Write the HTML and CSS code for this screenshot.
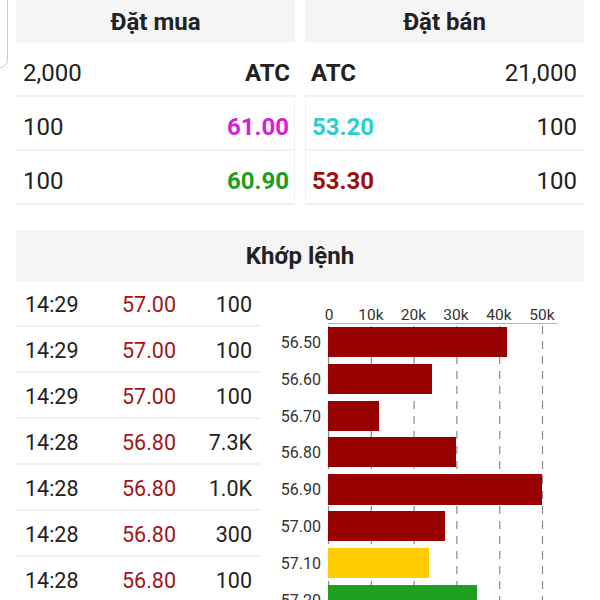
FILE: index.html
```html
<!DOCTYPE html>
<html lang="vi">
<head>
<meta charset="utf-8">
<title>Khớp lệnh</title>
<link rel="stylesheet" href="styles.css">
</head>
<body>
<div class="page">
  <div class="edge-handle"></div>

  <section class="book">
    <div class="book-col buy">
      <div class="book-head">Đặt mua</div>
      <div class="book-row"><span>2,000</span><span class="bold">ATC</span></div>
      <div class="book-row framed"><span>100</span><span class="bold c-ceil">61.00</span></div>
      <div class="book-row framed"><span>100</span><span class="bold c-up">60.90</span></div>
    </div>
    <div class="book-col sell">
      <div class="book-head">Đặt bán</div>
      <div class="book-row"><span class="bold">ATC</span><span>21,000</span></div>
      <div class="book-row framed"><span class="bold c-floor">53.20</span><span>100</span></div>
      <div class="book-row framed"><span class="bold c-down">53.30</span><span>100</span></div>
    </div>
  </section>

  <section class="match">
    <div class="match-head">Khớp lệnh</div>
    <div class="match-body">
      <div class="trades">
        <div class="trade"><span>14:29</span><span class="t-price">57.00</span><span class="t-vol">100</span></div>
        <div class="trade"><span>14:29</span><span class="t-price">57.00</span><span class="t-vol">100</span></div>
        <div class="trade"><span>14:29</span><span class="t-price">57.00</span><span class="t-vol">100</span></div>
        <div class="trade"><span>14:28</span><span class="t-price">56.80</span><span class="t-vol">7.3K</span></div>
        <div class="trade"><span>14:28</span><span class="t-price">56.80</span><span class="t-vol">1.0K</span></div>
        <div class="trade"><span>14:28</span><span class="t-price">56.80</span><span class="t-vol">300</span></div>
        <div class="trade"><span>14:28</span><span class="t-price">56.80</span><span class="t-vol">100</span></div>
      </div>
      <svg class="chart" width="340" height="319" viewBox="260 281 340 319" xmlns="http://www.w3.org/2000/svg">
        <g class="axis-text" font-size="15.5" text-anchor="middle">
          <text x="329" y="319.5">0</text>
          <text x="371" y="319.5">10k</text>
          <text x="413.5" y="319.5">20k</text>
          <text x="456" y="319.5">30k</text>
          <text x="499" y="319.5">40k</text>
          <text x="542" y="319.5">50k</text>
        </g>
        <line x1="328" y1="323.5" x2="558" y2="323.5" stroke="#b5b5b5" stroke-width="1"/>
        <g stroke="#8a8a8a" stroke-width="1.2" stroke-dasharray="8 7">
          <line x1="328.5" y1="326" x2="328.5" y2="600"/>
          <line x1="371.3" y1="326" x2="371.3" y2="600"/>
          <line x1="414.1" y1="326" x2="414.1" y2="600"/>
          <line x1="456.9" y1="326" x2="456.9" y2="600"/>
          <line x1="499.7" y1="326" x2="499.7" y2="600"/>
          <line x1="542.5" y1="326" x2="542.5" y2="600"/>
        </g>
        <g>
          <rect x="328" y="327" width="179" height="30" fill="#990000"/>
          <rect x="328" y="364" width="104" height="30" fill="#990000"/>
          <rect x="328" y="401" width="51" height="30" fill="#990000"/>
          <rect x="328" y="437" width="128" height="30" fill="#990000"/>
          <rect x="328" y="474" width="214" height="31" fill="#990000"/>
          <rect x="328" y="511" width="117" height="30" fill="#990000"/>
          <rect x="328" y="548" width="101" height="30" fill="#ffcc00"/>
          <rect x="328" y="585" width="149" height="30" fill="#1ea01e"/>
        </g>
        <g class="axis-text" font-size="16" text-anchor="end">
          <text x="321" y="347.5">56.50</text>
          <text x="321" y="384.5">56.60</text>
          <text x="321" y="421.5">56.70</text>
          <text x="321" y="458">56.80</text>
          <text x="321" y="495">56.90</text>
          <text x="321" y="532">57.00</text>
          <text x="321" y="569">57.10</text>
          <text x="321" y="606">57.20</text>
        </g>
      </svg>
    </div>
  </section>
</div>
</body>
</html>
```

FILE: styles.css
```css
* { box-sizing: border-box; }

html, body {
  margin: 0;
  padding: 0;
  background: #ffffff;
}

body {
  font-family: Roboto, "Liberation Sans", Arial, sans-serif;
  color: #222222;
}

.page {
  position: relative;
  width: 600px;
  height: 600px;
  overflow: hidden;
  background: #ffffff;
}

.edge-handle {
  position: absolute;
  left: -20px;
  top: -10px;
  width: 28px;
  height: 78px;
  border: 1px solid #c9c9c9;
  border-radius: 8px;
  background: #ffffff;
}

/* ---------- order book ---------- */
.book {
  display: grid;
  grid-template-columns: 279px 279px;
  column-gap: 10px;
  padding: 0 16px;
}

.book-head {
  height: 43px;
  line-height: 43px;
  padding-top: 1px;
  background: #f5f5f5;
  text-align: center;
  font-weight: 700;
  font-size: 24px;
  color: #222222;
}

.book-row {
  height: 54px;
  display: flex;
  align-items: center;
  justify-content: space-between;
  border-bottom: 2px solid #f1f1f1;
  font-size: 24px;
  padding-top: 8px;
}

.buy .book-row { padding-left: 7px; padding-right: 5px; }
.sell .book-row { padding-left: 6px; padding-right: 7px; }

.buy .book-row.framed { border-right: 1px solid #f0f0f0; }
.sell .book-row.framed { border-left: 1px solid #f0f0f0; }

.bold { font-weight: 700; }
.c-ceil { color: #d61fd6; }
.c-up { color: #1e9e1e; }
.c-floor { color: #2ccfcf; }
.c-down { color: #a00d0d; }

/* ---------- matched orders ---------- */
.match {
  margin-top: 25px;
}

.match-head {
  margin: 0 16px;
  height: 51px;
  line-height: 49px;
  padding-top: 2px;
  background: #f5f5f5;
  text-align: center;
  font-weight: 700;
  font-size: 24px;
  color: #222222;
}

.match-body {
  display: grid;
  grid-template-columns: 244px 340px;
  padding-left: 16px;
}

.trade {
  height: 46px;
  display: grid;
  grid-template-columns: 97px 1fr auto;
  align-items: center;
  padding: 3px 8px 0 9px;
  border-bottom: 2px solid #f1f1f1;
  font-size: 21.5px;
  color: #222222;
}

.t-price { color: #a0161c; }
.t-vol { text-align: right; }

.chart {
  display: block;
}

.axis-text text {
  fill: #333333;
  font-family: Roboto, "Liberation Sans", Arial, sans-serif;
}
```
